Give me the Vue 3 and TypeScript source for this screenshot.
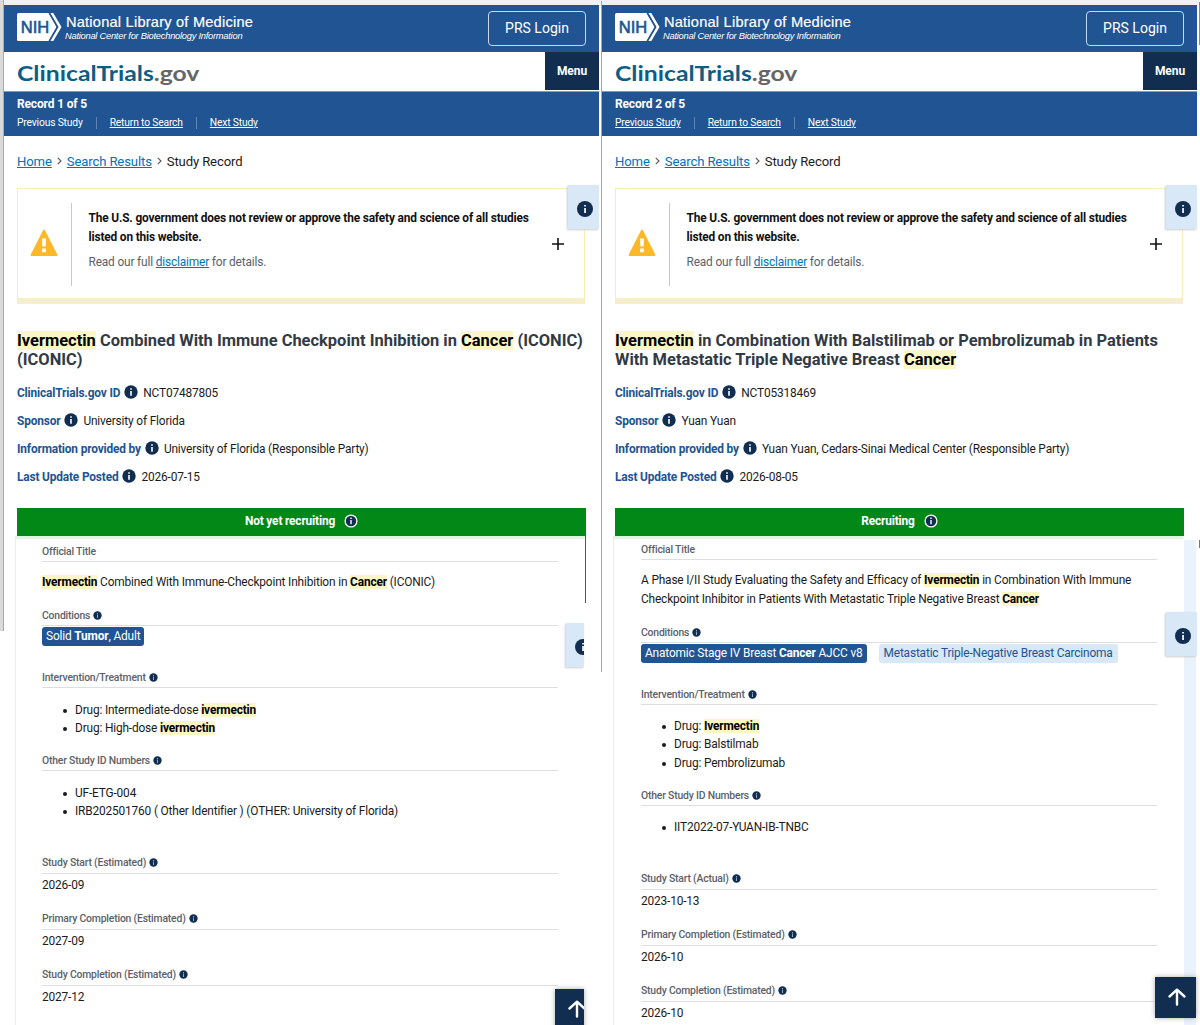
<script setup lang="ts">
interface Part { t: string; hl?: boolean; b?: boolean }
interface Section {
  label: string
  kind: 'text' | 'tags' | 'list' | 'ids' | 'date'
  info?: boolean
  lines: Part[][]
}
interface Meta { label: string; value: string }
interface Study {
  side: 'left' | 'right'
  record: string
  hasPrevious: boolean
  title: Part[][]
  meta: Meta[]
  status: string
  sections: Section[]
}

const p = (t: string): Part => ({ t })
const hl = (t: string): Part => ({ t, hl: true })

const studies: Study[] = [
  {
    side: 'left',
    record: 'Record 1 of 5',
    hasPrevious: false,
    title: [
      [hl('Ivermectin'), p(' Combined With Immune Checkpoint Inhibition in '), hl('Cancer'), p(' (ICONIC)')],
      [p('(ICONIC)')],
    ],
    meta: [
      { label: 'ClinicalTrials.gov ID', value: 'NCT07487805' },
      { label: 'Sponsor', value: 'University of Florida' },
      { label: 'Information provided by', value: 'University of Florida (Responsible Party)' },
      { label: 'Last Update Posted', value: '2026-07-15' },
    ],
    status: 'Not yet recruiting',
    sections: [
      {
        label: 'Official Title',
        kind: 'text',
        lines: [[hl('Ivermectin'), p(' Combined With Immune-Checkpoint Inhibition in '), hl('Cancer'), p(' (ICONIC)')]],
      },
      { label: 'Conditions', kind: 'tags', info: true, lines: [[p('Solid '), { t: 'Tumor', b: true }, p(', Adult')]] },
      {
        label: 'Intervention/Treatment',
        kind: 'list',
        info: true,
        lines: [[p('Drug: Intermediate-dose '), hl('ivermectin')], [p('Drug: High-dose '), hl('ivermectin')]],
      },
      {
        label: 'Other Study ID Numbers',
        kind: 'ids',
        info: true,
        lines: [[p('UF-ETG-004')], [p('IRB202501760 ( Other Identifier ) (OTHER: University of Florida)')]],
      },
      { label: 'Study Start (Estimated)', kind: 'date', info: true, lines: [[p('2026-09')]] },
      { label: 'Primary Completion (Estimated)', kind: 'date', info: true, lines: [[p('2027-09')]] },
      { label: 'Study Completion (Estimated)', kind: 'date', info: true, lines: [[p('2027-12')]] },
    ],
  },
  {
    side: 'right',
    record: 'Record 2 of 5',
    hasPrevious: true,
    title: [
      [hl('Ivermectin'), p(' in Combination With Balstilimab or Pembrolizumab in Patients')],
      [p('With Metastatic Triple Negative Breast '), hl('Cancer')],
    ],
    meta: [
      { label: 'ClinicalTrials.gov ID', value: 'NCT05318469' },
      { label: 'Sponsor', value: 'Yuan Yuan' },
      { label: 'Information provided by', value: 'Yuan Yuan, Cedars-Sinai Medical Center (Responsible Party)' },
      { label: 'Last Update Posted', value: '2026-08-05' },
    ],
    status: 'Recruiting',
    sections: [
      {
        label: 'Official Title',
        kind: 'text',
        lines: [
          [p('A Phase I/II Study Evaluating the Safety and Efficacy of '), hl('Ivermectin'), p(' in Combination With Immune')],
          [p('Checkpoint Inhibitor in Patients With Metastatic Triple Negative Breast '), hl('Cancer')],
        ],
      },
      {
        label: 'Conditions',
        kind: 'tags',
        info: true,
        lines: [
          [p('Anatomic Stage IV Breast '), { t: 'Cancer', b: true }, p(' AJCC v8')],
          [p('Metastatic Triple-Negative Breast Carcinoma')],
        ],
      },
      {
        label: 'Intervention/Treatment',
        kind: 'list',
        info: true,
        lines: [[p('Drug: '), hl('Ivermectin')], [p('Drug: Balstilmab')], [p('Drug: Pembrolizumab')]],
      },
      { label: 'Other Study ID Numbers', kind: 'ids', info: true, lines: [[p('IIT2022-07-YUAN-IB-TNBC')]] },
      { label: 'Study Start (Actual)', kind: 'date', info: true, lines: [[p('2023-10-13')]] },
      { label: 'Primary Completion (Estimated)', kind: 'date', info: true, lines: [[p('2026-10')]] },
      { label: 'Study Completion (Estimated)', kind: 'date', info: true, lines: [[p('2026-10')]] },
    ],
  },
]

const cls = (x: Part) => ({ hl: x.hl, b: x.b })
</script>

<template>
  <div class="page">
    <section v-for="s in studies" :key="s.record" class="panel" :class="s.side">
      <header class="nlm">
        <svg class="nih" width="45" height="28" viewBox="0 0 45 28">
          <path d="M1.500 0H31.500L39.500 14L31.500 28H1.500Q0 28 0 26.500V1.500Q0 0 1.500 0Z" fill="#fff" />
          <path d="M33.300 0H36.300L44.500 14L36.300 28H33.300L41.500 14Z" fill="#fff" />
          <path d="M32.300 0L40.500 14L32.300 28" fill="none" stroke="#205493" stroke-width="1.300" />
          <text x="3.800" y="20.200" textLength="28.500" lengthAdjust="spacingAndGlyphs" class="nih-text">NIH</text>
        </svg>
        <div class="nlm-name">
          <div class="nlm-main">National Library of Medicine</div>
          <div class="nlm-sub">National Center for Biotechnology Information</div>
        </div>
        <button class="login">PRS Login</button>
      </header>

      <div class="brand">
        <div class="logo">ClinicalTrials<span>.gov</span></div>
        <div class="menu">Menu</div>
      </div>

      <nav class="record">
        <div class="record-no">{{ s.record }}</div>
        <div class="record-links">
          <span :class="{ link: s.hasPrevious }">Previous Study</span>
          <i></i><span class="link">Return to Search</span>
          <i></i><span class="link">Next Study</span>
        </div>
      </nav>

      <main>
        <div class="crumbs">
          <a>Home</a>
          <svg width="5" height="8" viewBox="0 0 5 8"><path d="M.8 .8L4 4L.8 7.200" fill="none" stroke="#555" stroke-width="1.100" /></svg>
          <a>Search Results</a>
          <svg width="5" height="8" viewBox="0 0 5 8"><path d="M.8 .8L4 4L.8 7.200" fill="none" stroke="#555" stroke-width="1.100" /></svg>
          <span>Study Record</span>
        </div>

        <div class="alert">
          <div class="warn">
            <svg width="28" height="28" viewBox="0 0 28 28">
              <path d="M14 1.500L26.500 26H1.500Z" fill="#fdb827" stroke="#fdb827" stroke-width="1.800" stroke-linejoin="round" />
              <path d="M12 9.500H16L15.600 17.500H12.400ZM12.100 19.500H15.900V23.200H12.100Z" fill="#fff" />
            </svg>
          </div>
          <div class="alert-text">
            <b>The U.S. government does not review or approve the safety and science of all studies<br />listed on this website.</b>
            <div>Read our full <a>disclaimer</a> for details.</div>
          </div>
          <svg class="plus" width="12" height="12" viewBox="0 0 12 12"><path d="M6 0V12M0 6H12" stroke="#111" stroke-width="1.600" /></svg>
        </div>

        <h1>
          <div v-for="(line, i) in s.title" :key="i"><span v-for="(x, j) in line" :key="j" :class="cls(x)">{{ x.t }}</span></div>
        </h1>

        <div class="meta">
          <div v-for="m in s.meta" :key="m.label">
            <b>{{ m.label }}</b>
            <svg width="14" height="14" viewBox="0 0 14 14">
              <circle cx="7" cy="7" r="6.700" fill="#112e51" />
              <path d="M6.200 3.200H7.800V4.700H6.200ZM6.200 5.900H7.800V10.800H6.200Z" fill="#fff" />
            </svg>
            <span>{{ m.value }}</span>
          </div>
        </div>

        <div class="status">
          <span>{{ s.status }}</span>
          <svg width="14" height="14" viewBox="0 0 14 14">
            <circle cx="7" cy="7" r="5.900" fill="#112e51" stroke="#fff" stroke-width="1.300" />
            <path d="M6.300 3.600H7.700V5H6.300ZM6.300 5.900H7.700V10.200H6.300Z" fill="#fff" />
          </svg>
        </div>
      </main>

      <div class="card">
        <div v-for="sec in s.sections" :key="sec.label" class="sec" :class="sec.kind">
          <div class="label">
            <span>{{ sec.label }}</span>
            <svg v-if="sec.info" width="9" height="9" viewBox="0 0 14 14">
              <circle cx="7" cy="7" r="6.500" fill="#112e51" />
              <path d="M6.200 3.200H7.800V4.900H6.200ZM6.200 6H7.800V10.800H6.200Z" fill="#8fa5c2" />
            </svg>
          </div>
          <div class="body">
            <div v-for="(line, i) in sec.lines" :key="i" class="line"><span v-for="(x, j) in line" :key="j" :class="cls(x)">{{ x.t }}</span></div>
          </div>
        </div>
      </div>

      <div v-for="n in 2" :key="n" class="tab" :class="'tab' + n">
        <svg width="16" height="16" viewBox="0 0 16 16">
          <circle cx="8" cy="8" r="8" fill="#112e51" />
          <path d="M7.200 4H8.900V5.600H7.200ZM7.200 6.900H8.900V12H7.200Z" fill="#fff" />
        </svg>
      </div>
      <div class="totop">
        <svg width="20" height="20" viewBox="0 0 20 20">
          <path d="M10 17.500V3M2.500 9.500L10 2.700L17.500 9.500" fill="none" stroke="#fff" stroke-width="2.400" stroke-linecap="round" stroke-linejoin="round" />
        </svg>
      </div>
    </section>
    <div class="edge"></div>
    <div class="divider"></div>
    <div class="thumb"></div>
    <div class="tick"></div>
  </div>
</template>

<style>
body { margin: 0; overflow: hidden; background: #fff; }
</style>

<style scoped>
* { box-sizing: border-box; }
.page {
  position: relative;
  display: flex;
  gap: 3px;
  width: 1200px;
  height: 1025px;
  padding: 5px 0 0 4px;
  overflow: hidden;
  background: linear-gradient(#f0f0f0 5px, #fff 5px);
  font-family: Roboto, "Liberation Sans", sans-serif;
  font-size: 11.900px;
  letter-spacing: -.165px;
  color: #1b1b1b;
  white-space: pre;
}
.panel { position: relative; width: 595px; height: 1020px; flex: none; background: #fff; }
.edge { position: absolute; left: 0; top: 0; width: 4px; height: 631px; background: #dadada; border-right: 1px solid #aaa; }
.divider { position: absolute; left: 601px; top: 1px; width: 1px; height: 671px; background: #a6a6a6; }
.thumb { position: absolute; left: 1199px; top: 2px; width: 1px; height: 43px; background: #888; }
.tick { position: absolute; left: 1199px; top: 540px; width: 1px; height: 8px; background: #777; }

.nlm { display: flex; height: 47px; padding: 0 13px; background: #205493; color: #fff; }
.nih { margin-top: 8px; }
.nih-text { font: 400 17px "Liberation Sans", sans-serif; letter-spacing: 0; fill: #205493; stroke: #205493; stroke-width: .6px; }
.nlm-name { margin: 9px 0 0 4px; font-family: "Liberation Sans", sans-serif; letter-spacing: 0; }
.nlm-main { font-size: 14.600px; letter-spacing: .22px; line-height: 16px; -webkit-text-stroke: .2px #fff; }
.nlm-sub { margin: 1px 0 0 -1px; font-size: 9.300px; letter-spacing: -.24px; line-height: 11px; font-style: italic; }
.login {
  width: 98px; height: 35px; margin: 6px 0 0 auto; padding: 0 0 1px;
  border: 1px solid #c9d8ec; border-radius: 4px; background: none;
  color: #fff; font: 14px Roboto, sans-serif;
}
.brand { display: flex; justify-content: space-between; height: 40px; border-bottom: 1px solid #7d9cc2; background: #fff; }
.logo { padding-left: 13px; font: 700 21.500px/43px Lato, sans-serif; letter-spacing: 0; color: #0b5e84; transform: scaleX(1.150); transform-origin: 13px 0; }
.logo span { color: #666; }
.menu { width: 54px; height: 38px; background: #112e51; color: #fff; font-weight: 700; font-size: 12px; letter-spacing: -.1px; line-height: 38px; text-align: center; }
.record { height: 44px; padding: 4px 13px 0; background: #205493; color: #fff; }
.record-no { font-size: 12px; letter-spacing: -.15px; font-weight: 700; line-height: 16px; }
.record-links { display: flex; align-items: center; margin-top: 3px; font-size: 10.300px; letter-spacing: -.17px; line-height: 15px; }
.record-links i { width: 1px; height: 12px; margin: 0 13px; background: #5f84b5; }
.link { text-decoration: underline; }

main { padding: 0 13px; }
a { color: #0071bc; text-decoration: underline; }
.crumbs { display: flex; align-items: center; gap: 5px; height: 52px; padding-bottom: 2px; font-size: 13.100px; letter-spacing: -.12px; }
.alert { display: flex; position: relative; width: 568px; height: 116px; border: 1px solid #f7edb5; border-bottom: 6px solid #f6efcb; padding-top: 14px; }
.warn { width: 54px; height: 83px; border-right: 1px solid #f8c84e; padding: 26px 0 0 12px; }
.alert-text { padding: 5.500px 0 0 16.500px; line-height: 19px; color: #5b616b; }
.alert-text b { color: #111; }
.alert-text div { margin-top: 6.500px; }
.plus { position: absolute; left: 533.500px; top: 49px; }
h1 { margin: 27px 0 0; height: 38px; font-size: 16.470px; letter-spacing: 0; line-height: 19px; font-weight: 700; color: #323a45; }
.hl { background: #fbf6c5; color: #000; font-weight: 700; }
.b { font-weight: 700; }
.meta { margin-top: 10px; }
.meta > div { display: flex; align-items: center; height: 28px; }
.meta b { color: #205493; }
.meta svg { margin: 0 5px 3px 4px; }
.status { display: flex; justify-content: center; align-items: center; gap: 9px; width: 569px; height: 28px; margin-top: 17px; background: #028817; color: #fff; font-weight: 700; padding-bottom: 2px; }

.card { position: relative; height: 489px; margin-left: 11px; padding-left: 26px; border-left: 1px solid #e2f0f9; background: linear-gradient(#def5e1, #def5e1) 0 0 / 569px 3px no-repeat; overflow: hidden; }
.left .card { padding-top: 7.400px; width: 571px; }
.left .card::after { content: ""; position: absolute; right: 0; top: 0; width: 1px; height: 67px; background: #028817; }
.right .card { padding-top: 4.500px; padding-left: 27px; width: 583px; }
.right .card::after { content: ""; position: absolute; right: 0; top: 4px; width: 12px; height: 490px; background: #eaf3fb; }
.sec { width: 516px; }
.label { display: flex; align-items: center; gap: 3px; height: 19px; padding-bottom: 1px; border-bottom: 1px solid #dcdee0; font-size: 10.400px; letter-spacing: -.19px; font-weight: 500; color: #5b616b; }
.text .body { padding: 11px 0 15px; line-height: 19px; }
.tags .body { display: flex; gap: 12px; height: 43px; padding-top: 1px; }
.tags .line { height: 19px; padding: 0 4px; border-radius: 3px; background: #205493; color: #fff; line-height: 18px; }
.tags .line + .line { padding: 0 5px; background: #d9e8f6; color: #205493; }
.list .body { padding: 12.300px 0 14.500px; }
.ids .body { padding: 12.300px 0 32.700px; }
.list .line, .ids .line { position: relative; padding-left: 33px; line-height: 18.600px; }
.list .line::before, .ids .line::before { content: ""; position: absolute; left: 21px; top: 8px; width: 4px; height: 4px; border-radius: 50%; background: #1b1b1b; }
.date .label { height: 20px; padding-bottom: 2px; }
.date .body { height: 36px; padding-top: 2px; line-height: 18px; }

.tab { position: absolute; left: 564px; width: 31px; height: 44px; padding: 16px 0 0 9px; overflow: hidden; background: #d9e8f6; box-shadow: -1px 1px 2px #ccc; }
.tab svg, .totop svg { display: block; }
.tab1 { top: 180px; }
.right .tab2 { top: 607px; }
.left .tab2 { left: 562px; top: 618px; width: 18px; }
.totop { position: absolute; left: 553px; top: 972px; width: 41px; height: 41px; padding: 10px 0 0 12px; overflow: hidden; background: #112e51; box-shadow: 0 0 5px #aaa; }
.left .totop { left: 551px; top: 984px; width: 29px; }
</style>
